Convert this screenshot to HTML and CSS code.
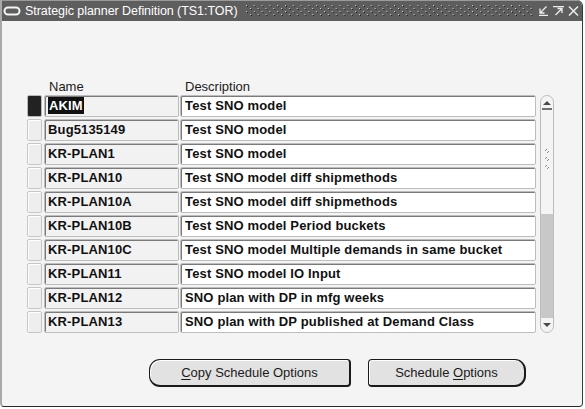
FILE: index.html
```html
<!DOCTYPE html>
<html>
<head>
<meta charset="utf-8">
<title>Strategic planner Definition</title>
<link rel="stylesheet" href="styles.css">
</head>
<body>
<div class="window">
  <div class="titlebar">
    <svg class="app-icon" width="18" height="10" viewBox="0 0 18 10"><rect x="1.5" y="1.5" width="15" height="7" rx="3.5" fill="none" stroke="#f4f4f4" stroke-width="2"/></svg>
    <span class="title">Strategic planner Definition (TS1:TOR)</span>
    <svg class="dots" height="12" viewBox="0 0 296 12" preserveAspectRatio="none">
      <defs>
        <pattern id="dp" width="8" height="6" patternUnits="userSpaceOnUse">
          <rect x="0" y="0" width="1" height="1" fill="#cfcfcf"/>
          <rect x="1" y="1" width="1" height="1" fill="#1e1e1e"/>
          <rect x="4" y="3" width="1" height="1" fill="#cfcfcf"/>
          <rect x="5" y="4" width="1" height="1" fill="#1e1e1e"/>
        </pattern>
      </defs>
      <rect x="0" y="0" width="296" height="12" fill="url(#dp)"/>
    </svg>
    <div class="controls">
      <svg width="11" height="10" viewBox="0 0 11 10"><path d="M8.5 0.5 L2 7 M2 2.5 V7 H6.5 M1 9.5 H10" fill="none" stroke="#ececec" stroke-width="1.3"/></svg>
      <svg width="11" height="10" viewBox="0 0 11 10"><path d="M0 0.7 H11 M2.5 9 L9 2.5 M4.5 2.5 H9 V7" fill="none" stroke="#ececec" stroke-width="1.3"/></svg>
      <svg width="11" height="10" viewBox="0 0 11 10"><path d="M1 0.5 L10 9.5 M10 0.5 L1 9.5" fill="none" stroke="#ececec" stroke-width="1.5"/></svg>
    </div>
  </div>
  <div class="body">
    <div class="headers">
      <span class="h-name">Name</span>
      <span class="h-desc">Description</span>
    </div>
    <div class="grid">
      <div class="rows">
        <div class="row"><div class="ind active"></div><div class="f name"><span class="sel">AKIM</span></div><div class="f desc">Test SNO model</div></div>
        <div class="row"><div class="ind"></div><div class="f name">Bug5135149</div><div class="f desc">Test SNO model</div></div>
        <div class="row"><div class="ind"></div><div class="f name">KR-PLAN1</div><div class="f desc">Test SNO model</div></div>
        <div class="row"><div class="ind"></div><div class="f name">KR-PLAN10</div><div class="f desc">Test SNO model diff shipmethods</div></div>
        <div class="row"><div class="ind"></div><div class="f name">KR-PLAN10A</div><div class="f desc">Test SNO model diff shipmethods</div></div>
        <div class="row"><div class="ind"></div><div class="f name">KR-PLAN10B</div><div class="f desc">Test SNO model Period buckets</div></div>
        <div class="row"><div class="ind"></div><div class="f name">KR-PLAN10C</div><div class="f desc">Test SNO model Multiple demands in same bucket</div></div>
        <div class="row"><div class="ind"></div><div class="f name">KR-PLAN11</div><div class="f desc">Test SNO model IO Input</div></div>
        <div class="row"><div class="ind"></div><div class="f name">KR-PLAN12</div><div class="f desc">SNO plan with DP in mfg weeks</div></div>
        <div class="row"><div class="ind"></div><div class="f name">KR-PLAN13</div><div class="f desc">SNO plan with DP published at Demand Class</div></div>
      </div>
      <div class="sb">
        <div class="sb-up"><svg width="8" height="4" viewBox="0 0 8 4"><path d="M0 4 L4 0 L8 4 Z" fill="#4a4a4a"/></svg></div>
        <div class="sb-thumb"><svg class="grip" width="6" height="26" viewBox="0 0 6 26"><path d="M1 4 L3 2 M3 6 L5 4 M1 12 L3 10 M3 14 L5 12 M1 20 L3 18 M3 22 L5 20" stroke="#8a8a8a" stroke-width="1" fill="none"/></svg></div>
        <div class="sb-track"></div>
        <div class="sb-down"><svg width="8" height="4" viewBox="0 0 8 4"><path d="M0 0 L8 0 L4 4 Z" fill="#4a4a4a"/></svg></div>
      </div>
    </div>
    <div class="buttons">
      <button class="btn btn-left"><u>C</u>opy Schedule Options</button>
      <button class="btn btn-right">Schedule <u>O</u>ptions</button>
    </div>
  </div>
</div>
</body>
</html>
```

FILE: styles.css
```css
html, body {
  margin: 0;
  padding: 0;
  background: #ffffff;
}
body {
  width: 585px;
  height: 409px;
  overflow: hidden;
  font-family: "Liberation Sans", Arial, sans-serif;
  font-size: 13px;
  color: #111;
}
.window {
  width: 580px;
  height: 406px;
  background: #f4f4f4;
  border-left: 2px solid #a9a9a9;
  border-right: 1px solid #3a3a3a;
  border-bottom: 1px solid #2a2a2a;
  border-top-right-radius: 6px;
  border-bottom-right-radius: 4px;
  border-bottom-left-radius: 4px;
  overflow: hidden;
  display: flex;
  flex-direction: column;
}
.titlebar {
  height: 20px;
  border-top: 1px solid #9a9a9a;
  background: #5e5e5e;
  display: flex;
  align-items: center;
  color: #ffffff;
  flex-shrink: 0;
}
.app-icon {
  margin-left: 1px;
  margin-right: 4px;
  flex-shrink: 0;
}
.title {
  font-size: 12.5px;
  white-space: nowrap;
  letter-spacing: -0.05px;
}
.dots {
  flex: 1;
  margin-left: 8px;
  margin-right: 4px;
  height: 12px;
}
.controls {
  display: flex;
  gap: 4px;
  margin-right: 3px;
  align-items: center;
}
.body {
  flex: 1;
  padding: 59px 0 0 25px;
}
.headers {
  height: 15px;
  line-height: 14px;
  display: flex;
  color: #1a1a1a;
}
.h-name {
  margin-left: 22px;
  width: 136px;
}
.grid {
  display: flex;
  align-items: flex-start;
}
.rows {
  display: flex;
  flex-direction: column;
  gap: 2px;
}
.row {
  display: flex;
  height: 22px;
}
.ind {
  width: 13px;
  height: 20px;
  margin-right: 2px;
  border: 1px solid #c6c6c6;
  border-radius: 2px;
  background: #eeeeee;
  box-shadow: inset 1px 1px 0 #ffffff;
}
.ind.active {
  background: #222222;
  border-color: #b8b8b8;
  box-shadow: none;
}
.f {
  height: 20px;
  line-height: 20px;
  font-weight: bold;
  letter-spacing: 0.15px;
  white-space: nowrap;
  overflow: hidden;
  border: 1px solid #bdbdbd;
  border-radius: 2px;
  box-shadow: inset 1px 1px 0 #7a7a7a;
  box-sizing: content-box;
}
.name {
  width: 130px;
  padding-left: 3px;
  margin-right: 1px;
  background: #f2f2f2;
}
.desc {
  width: 350px;
  padding-left: 4px;
  background: #ffffff;
}
.sel {
  background: #111111;
  color: #ffffff;
  padding: 1px;
}
.sb {
  margin-left: 4px;
  width: 12px;
  height: 236px;
  border: 1px solid #bcbcbc;
  border-radius: 7px;
  overflow: hidden;
  background: #f4f4f4;
  display: flex;
  flex-direction: column;
}
.sb-up {
  height: 12px;
  border-bottom: 2px solid #707070;
  margin: 0 1px;
  display: flex;
  justify-content: center;
  align-items: flex-start;
}
.sb-up svg {
  margin-top: 5px;
}
.sb-thumb {
  height: 104px;
  display: flex;
  justify-content: center;
  align-items: flex-start;
}
.grip {
  margin-top: 37px;
}
.sb-track {
  flex: 1;
  background: #c8c8c8;
}
.sb-down {
  height: 14px;
  display: flex;
  justify-content: center;
  align-items: flex-start;
}
.sb-down svg {
  margin-top: 5px;
}
.buttons {
  display: flex;
  gap: 17px;
  margin-top: 26px;
  padding-left: 122px;
}
.btn {
  height: 28px;
  padding: 0;
  margin: 0;
  font-family: "Liberation Sans", Arial, sans-serif;
  font-size: 13px;
  color: #1a1a1a;
  background: #e2e2e2;
  border: 1px solid #1a1a1a;
  border-right-width: 2px;
  border-bottom-width: 2px;
  box-shadow: inset 1px 1px 0 #ffffff;
}
.btn u {
  text-underline-offset: 2px;
}
.btn-left {
  width: 202px;
  border-radius: 11px 4px 4px 11px;
}
.btn-right {
  width: 158px;
  border-radius: 4px 11px 11px 4px;
}
```
